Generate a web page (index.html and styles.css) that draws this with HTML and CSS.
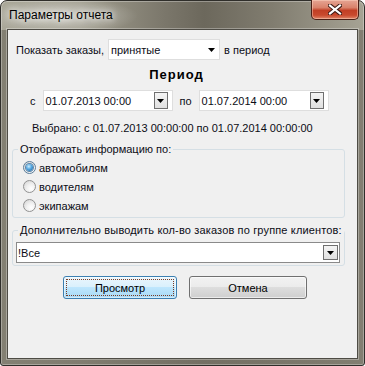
FILE: index.html
```html
<!DOCTYPE html>
<html lang="ru">
<head>
    <meta charset="UTF-8">
    <title>Параметры отчета</title>
    <link rel="stylesheet" href="styles.css">
</head>
<body>
    <div class="window">
        <div class="titlebar">
            <span class="title">Параметры отчета</span>
            <span class="close">
                <svg width="14" height="11" viewBox="0 0 14 11">
                    <path d="M2 1.5L12 9.5M12 1.5L2 9.5" stroke="#3b1a14" stroke-width="4.2" stroke-linecap="square"/>
                    <path d="M2 1.5L12 9.5M12 1.5L2 9.5" stroke="#fff" stroke-width="2.2" stroke-linecap="square"/>
                </svg>
            </span>
        </div>
        <div class="client">
            <div class="show-row">
                <span>Показать заказы,</span>
                <div class="combo flat">
                    <span class="value">принятые</span>
                    <svg class="arrow" width="7" height="4"><path d="M0 0h7L3.5 4z" fill="#000"/></svg>
                </div>
                <span class="after">в период</span>
            </div>
            <div class="heading">Период</div>
            <div class="date-row">
                <span>с</span>
                <div class="picker">
                    <span class="value">01.07.2013 00:00</span>
                    <span class="drop"><svg width="7" height="4"><path d="M0 0h7L3.5 4z" fill="#000"/></svg></span>
                </div>
                <span class="to">по</span>
                <div class="picker">
                    <span class="value">01.07.2014 00:00</span>
                    <span class="drop"><svg width="7" height="4"><path d="M0 0h7L3.5 4z" fill="#000"/></svg></span>
                </div>
            </div>
            <div class="selected">Выбрано: с 01.07.2013 00:00:00 по 01.07.2014 00:00:00</div>
            <fieldset class="group info">
                <legend>Отображать информацию по:</legend>
                <div class="options">
                    <div class="option"><span class="radio checked"></span>автомобилям</div>
                    <div class="option"><span class="radio"></span>водителям</div>
                    <div class="option"><span class="radio"></span>экипажам</div>
                </div>
            </fieldset>
            <fieldset class="group clients">
                <legend>Дополнительно выводить кол-во заказов по группе клиентов:</legend>
                <div class="combo boxed">
                    <span class="value">!Все</span>
                    <span class="drop"><svg width="7" height="4"><path d="M0 0h7L3.5 4z" fill="#000"/></svg></span>
                </div>
            </fieldset>
            <div class="buttons">
                <button class="btn primary"><span class="focus">Просмотр</span></button>
                <button class="btn cancel">Отмена</button>
            </div>
        </div>
    </div>
</body>
</html>
```

FILE: styles.css
```css
* {
    box-sizing: border-box;
}

body {
    margin: 0;
    font-family: "Liberation Sans", Arial, sans-serif;
    font-size: 11px;
    color: #0c0c16;
    background: #fff;
}

.window {
    width: 365px;
    height: 366px;
    border: 1px solid #2f2e2a;
    border-radius: 7px 7px 3px 3px;
    display: flex;
    flex-direction: column;
    background:
        radial-gradient(ellipse 75px 18px at 62px 15px, rgba(255, 255, 255, 0.45), rgba(255, 255, 255, 0)),
        linear-gradient(to bottom, rgba(118, 114, 102, 0) 29px, rgba(118, 114, 102, 0.75) 29px),
        linear-gradient(to right, #aaa899 0%, #a09d8e 22%, #7b776b 45%, #6c685c 56%, #817d70 75%, #a6a394 100%);
    box-shadow: inset 0 0 0 1px rgba(255, 255, 255, 0.3);
}

.titlebar {
    height: 28px;
    flex-shrink: 0;
    display: flex;
    align-items: flex-start;
    padding-left: 8px;
}

.title {
    font-size: 12px;
    line-height: 28px;
    color: #000;
    text-shadow: 0 0 6px #fff, 0 0 10px rgba(255, 255, 255, 0.8);
}

.close {
    margin-left: auto;
    margin-right: 5px;
    margin-top: -1px;
    width: 48px;
    height: 20px;
    display: flex;
    align-items: center;
    justify-content: center;
    border: 1px solid #4a1f16;
    border-top: none;
    border-radius: 0 0 5px 5px;
    background: linear-gradient(to bottom, #e6a594 0%, #d9826b 40%, #c13f25 55%, #c94a2e 80%, #e0876a 100%);
    box-shadow: inset 0 0 0 1px rgba(255, 220, 200, 0.45);
}

.client {
    margin: 0 6px;
    height: 330px;
    background: #f0f0f0;
    border: 1px solid #4e4c45;
    box-shadow: 0 0 0 1px rgba(255, 255, 255, 0.3);
}

/* first row */
.show-row {
    display: flex;
    align-items: center;
    height: 21px;
    margin: 9px 0 0 8px;
}

.combo {
    display: flex;
    align-items: center;
    background: #fff;
    height: 21px;
}

.combo.flat {
    width: 112px;
    margin-left: 4px;
    border: 1px solid #dedede;
    padding-left: 2px;
}

.combo.flat .arrow {
    margin-left: auto;
    margin-right: 4px;
}

.show-row .after {
    margin-left: 4px;
}

.heading {
    margin: 7px 12px 0 0;
    line-height: 16px;
    text-align: center;
    font-size: 13px;
    font-weight: bold;
    letter-spacing: 1px;
    color: #000;
}

/* dates */
.date-row {
    display: flex;
    align-items: center;
    height: 21px;
    margin: 7px 0 0 22px;
}

.picker {
    width: 130px;
    height: 21px;
    margin-left: 7px;
    display: flex;
    align-items: center;
    background: #fff;
    border: 1px solid #dedede;
    padding-left: 2px;
}

.date-row .to {
    margin-left: 7px;
}

.drop {
    margin-left: auto;
    width: 14px;
    height: 17px;
    display: flex;
    align-items: center;
    justify-content: center;
    border: 1px solid #6f6f6f;
    background: linear-gradient(to bottom, #f4f4f4, #e0e0e0);
}

.picker .drop {
    margin-right: 4px;
}

.selected {
    margin: 10px 0 0 24px;
    line-height: 14px;
}

/* group boxes */
.group {
    margin: 7px 0 0 4px;
    padding: 0;
    width: 333px;
    min-width: 0;
    border: 1px solid #d5dfe5;
    border-radius: 3px;
}

.group legend {
    margin-left: 5px;
    padding: 0 2px;
    line-height: 14px;
    white-space: nowrap;
}

.group.clients legend {
    letter-spacing: 0.15px;
}

.options {
    padding: 2px 0 2px 10px;
}

.option {
    display: flex;
    align-items: center;
    height: 19px;
}

.radio {
    width: 13px;
    height: 13px;
    margin-right: 3px;
    border-radius: 50%;
    border: 1px solid #929292;
    background: radial-gradient(circle at 65% 70%, #ffffff 0, #f1f1f1 40%, #d0d0d0 100%);
    display: flex;
    align-items: center;
    justify-content: center;
}

.radio.checked {
    border-color: #5a7d9a;
}

.radio.checked::after {
    content: "";
    width: 7px;
    height: 7px;
    border-radius: 50%;
    background: radial-gradient(circle at 40% 35%, #cdeefe 0, #52a6e0 45%, #1c5a92 100%);
    box-shadow: 0 0 0 1px #5e86a8;
}

.group.clients {
    margin-top: 5px;
}

.combo.boxed {
    width: 324px;
    margin: 5px 0 2px 3px;
    border: 1px solid #8a8a8a;
    padding-left: 1px;
}

.combo.boxed .drop {
    width: 15px;
    height: 15px;
    margin-right: 1px;
}

/* buttons */
.buttons {
    display: flex;
    margin: 10px 0 0 55px;
}

.btn {
    height: 23px;
    font-family: "Liberation Sans", Arial, sans-serif;
    font-size: 11px;
    color: #000;
    border-radius: 3px;
    padding: 0;
}

.btn.primary {
    width: 114px;
    border: 1px solid #3c7fb1;
    background: linear-gradient(to bottom, #eaf6fd 0%, #d9f0fc 50%, #bee6fd 50%, #a7d9f5 100%);
    box-shadow: inset 0 0 0 1px rgba(255, 255, 255, 0.5);
    padding: 2px;
}

.btn .focus {
    display: flex;
    align-items: center;
    justify-content: center;
    height: 100%;
    border: 1px dotted #7a3a22;
}

.btn.cancel {
    width: 118px;
    margin-left: 12px;
    border: 1px solid #707070;
    background: linear-gradient(to bottom, #f2f2f2 0%, #ebebeb 50%, #dddddd 50%, #cfcfcf 100%);
    box-shadow: inset 0 0 0 1px rgba(255, 255, 255, 0.6);
}
```
